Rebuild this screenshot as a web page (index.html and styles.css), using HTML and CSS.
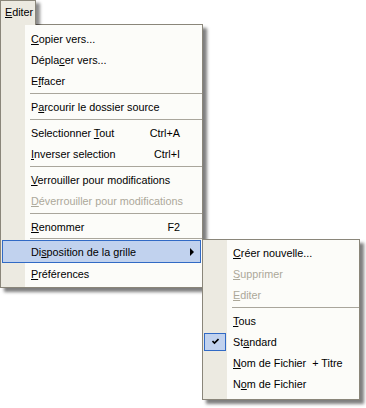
FILE: index.html
```html
<!DOCTYPE html>
<html lang="fr">
<head>
<meta charset="utf-8">
<title>Editer</title>
<link rel="stylesheet" href="styles.css">
</head>
<body>
<div class="wrap">
  <div class="topbtn"><u>E</u>diter</div>
  <div class="menu main">
    <div class="item"><span class="chk"></span><span class="lbl"><u>C</u>opier vers...</span><span class="key"></span><span class="arr"></span></div>
    <div class="item"><span class="chk"></span><span class="lbl">Dépla<u>c</u>er vers...</span><span class="key"></span><span class="arr"></span></div>
    <div class="item"><span class="chk"></span><span class="lbl">E<u>f</u>facer</span><span class="key"></span><span class="arr"></span></div>
    <div class="sep"></div>
    <div class="item"><span class="chk"></span><span class="lbl">P<u>a</u>rcourir le dossier source</span><span class="key"></span><span class="arr"></span></div>
    <div class="sep"></div>
    <div class="item"><span class="chk"></span><span class="lbl">Selectionner <u>T</u>out</span><span class="key">Ctrl+A</span><span class="arr"></span></div>
    <div class="item"><span class="chk"></span><span class="lbl"><u>I</u>nverser selection</span><span class="key">Ctrl+I</span><span class="arr"></span></div>
    <div class="sep"></div>
    <div class="item"><span class="chk"></span><span class="lbl"><u>V</u>errouiller pour modifications</span><span class="key"></span><span class="arr"></span></div>
    <div class="item disabled"><span class="chk"></span><span class="lbl"><u>D</u>éverrouiller pour modifications</span><span class="key"></span><span class="arr"></span></div>
    <div class="sep"></div>
    <div class="item"><span class="chk"></span><span class="lbl"><u>R</u>enommer</span><span class="key">F2</span><span class="arr"></span></div>
    <div class="sep tight"></div>
    <div class="item hot has-sub"><span class="chk"></span><span class="lbl">Di<u>s</u>position de la grille</span><span class="key"></span><span class="arr"><span class="tri"></span></span>
      <div class="menu sub">
        <div class="item"><span class="chk"></span><span class="lbl"><u>C</u>réer nouvelle...</span></div>
        <div class="item disabled"><span class="chk"></span><span class="lbl"><u>S</u>upprimer</span></div>
        <div class="item disabled"><span class="chk"></span><span class="lbl"><u>E</u>diter</span></div>
        <div class="sep"></div>
        <div class="item"><span class="chk"></span><span class="lbl"><u>T</u>ous</span></div>
        <div class="item"><span class="chk on"><svg width="7" height="7" viewBox="0 0 7 7"><path d="M0.5 3 L2.5 5 L6.5 1" fill="none" stroke="#000" stroke-width="1.6"/></svg></span><span class="lbl">St<u>a</u>ndard</span></div>
        <div class="item"><span class="chk"></span><span class="lbl"><u>N</u>om de Fichier&nbsp; + Titre</span></div>
        <div class="item"><span class="chk"></span><span class="lbl">N<u>o</u>m de Fichier</span></div>
      </div>
    </div>
    <div class="item"><span class="chk"></span><span class="lbl"><u>P</u>références</span><span class="key"></span><span class="arr"></span></div>
  </div>
</div>
</body>
</html>
```
FILE: styles.css
```css
* { box-sizing: border-box; }
html, body { margin: 0; background: #fff; }
body {
  font-family: "Liberation Sans", Arial, sans-serif;
  font-size: 10.8px;
  color: #000;
  width: 366px;
  height: 408px;
  overflow: hidden;
}
.wrap {
  display: flex;
  flex-direction: column;
  align-items: flex-start;
}
.topbtn {
  position: relative;
  z-index: 2;
  width: 36px;
  height: 25px;
  margin-bottom: -1px;
  padding: 5px 0 0 4px;
  background: #ECEAE1;
  border: 1px solid #8A867A;
  border-bottom: none;
  box-shadow: 4px 3px 3px rgba(0,0,0,0.45);
  clip-path: inset(-8px -8px 0 -8px);
}
.menu {
  position: relative;
  z-index: 1;
  background: linear-gradient(to right, #ECEAE1 0 24px, #FCFCF9 24px);
  border: 1px solid #8A867A;
  box-shadow: 4px 4px 3px rgba(0,0,0,0.5);
  padding: 3px 0;
}
.main { width: 203px; }
.item {
  display: grid;
  grid-template-columns: 24px 1fr auto 21px;
  align-items: center;
  height: 21px;
  margin: 0 1px;
  white-space: nowrap;
}
.lbl { padding-left: 5px; }
.key { text-align: right; }
.arr { display: flex; align-items: center; padding-left: 10px; }
.tri {
  width: 0; height: 0;
  border-left: 4px solid #000;
  border-top: 4px solid transparent;
  border-bottom: 4px solid transparent;
}
.disabled { color: #ACA899; }
.hot {
  height: 23px;
  background: #C1D2EE;
  box-shadow: inset 0 0 0 1px #316AC5;
}
.has-sub { position: relative; }
.sep {
  height: 5px;
  margin-left: 29px;
  display: flex;
  align-items: center;
}
.sep.tight { height: 3px; }
.sep::before {
  content: "";
  flex: 1;
  height: 1px;
  background: #A9A69C;
}
.sub {
  position: absolute;
  left: calc(100% + 1px);
  top: -1px;
  width: 158px;
  padding: 2px 0 5px;
  z-index: 3;
}
.sub .item { grid-template-columns: 24px 1fr; }
.chk { display: flex; align-items: center; justify-content: center; height: 100%; }
.chk.on {
  height: 18px;
  width: 22px;
  background: #C1D2EE;
  border: 1px solid #316AC5;
}
.chk.on svg { display: block; }
```
